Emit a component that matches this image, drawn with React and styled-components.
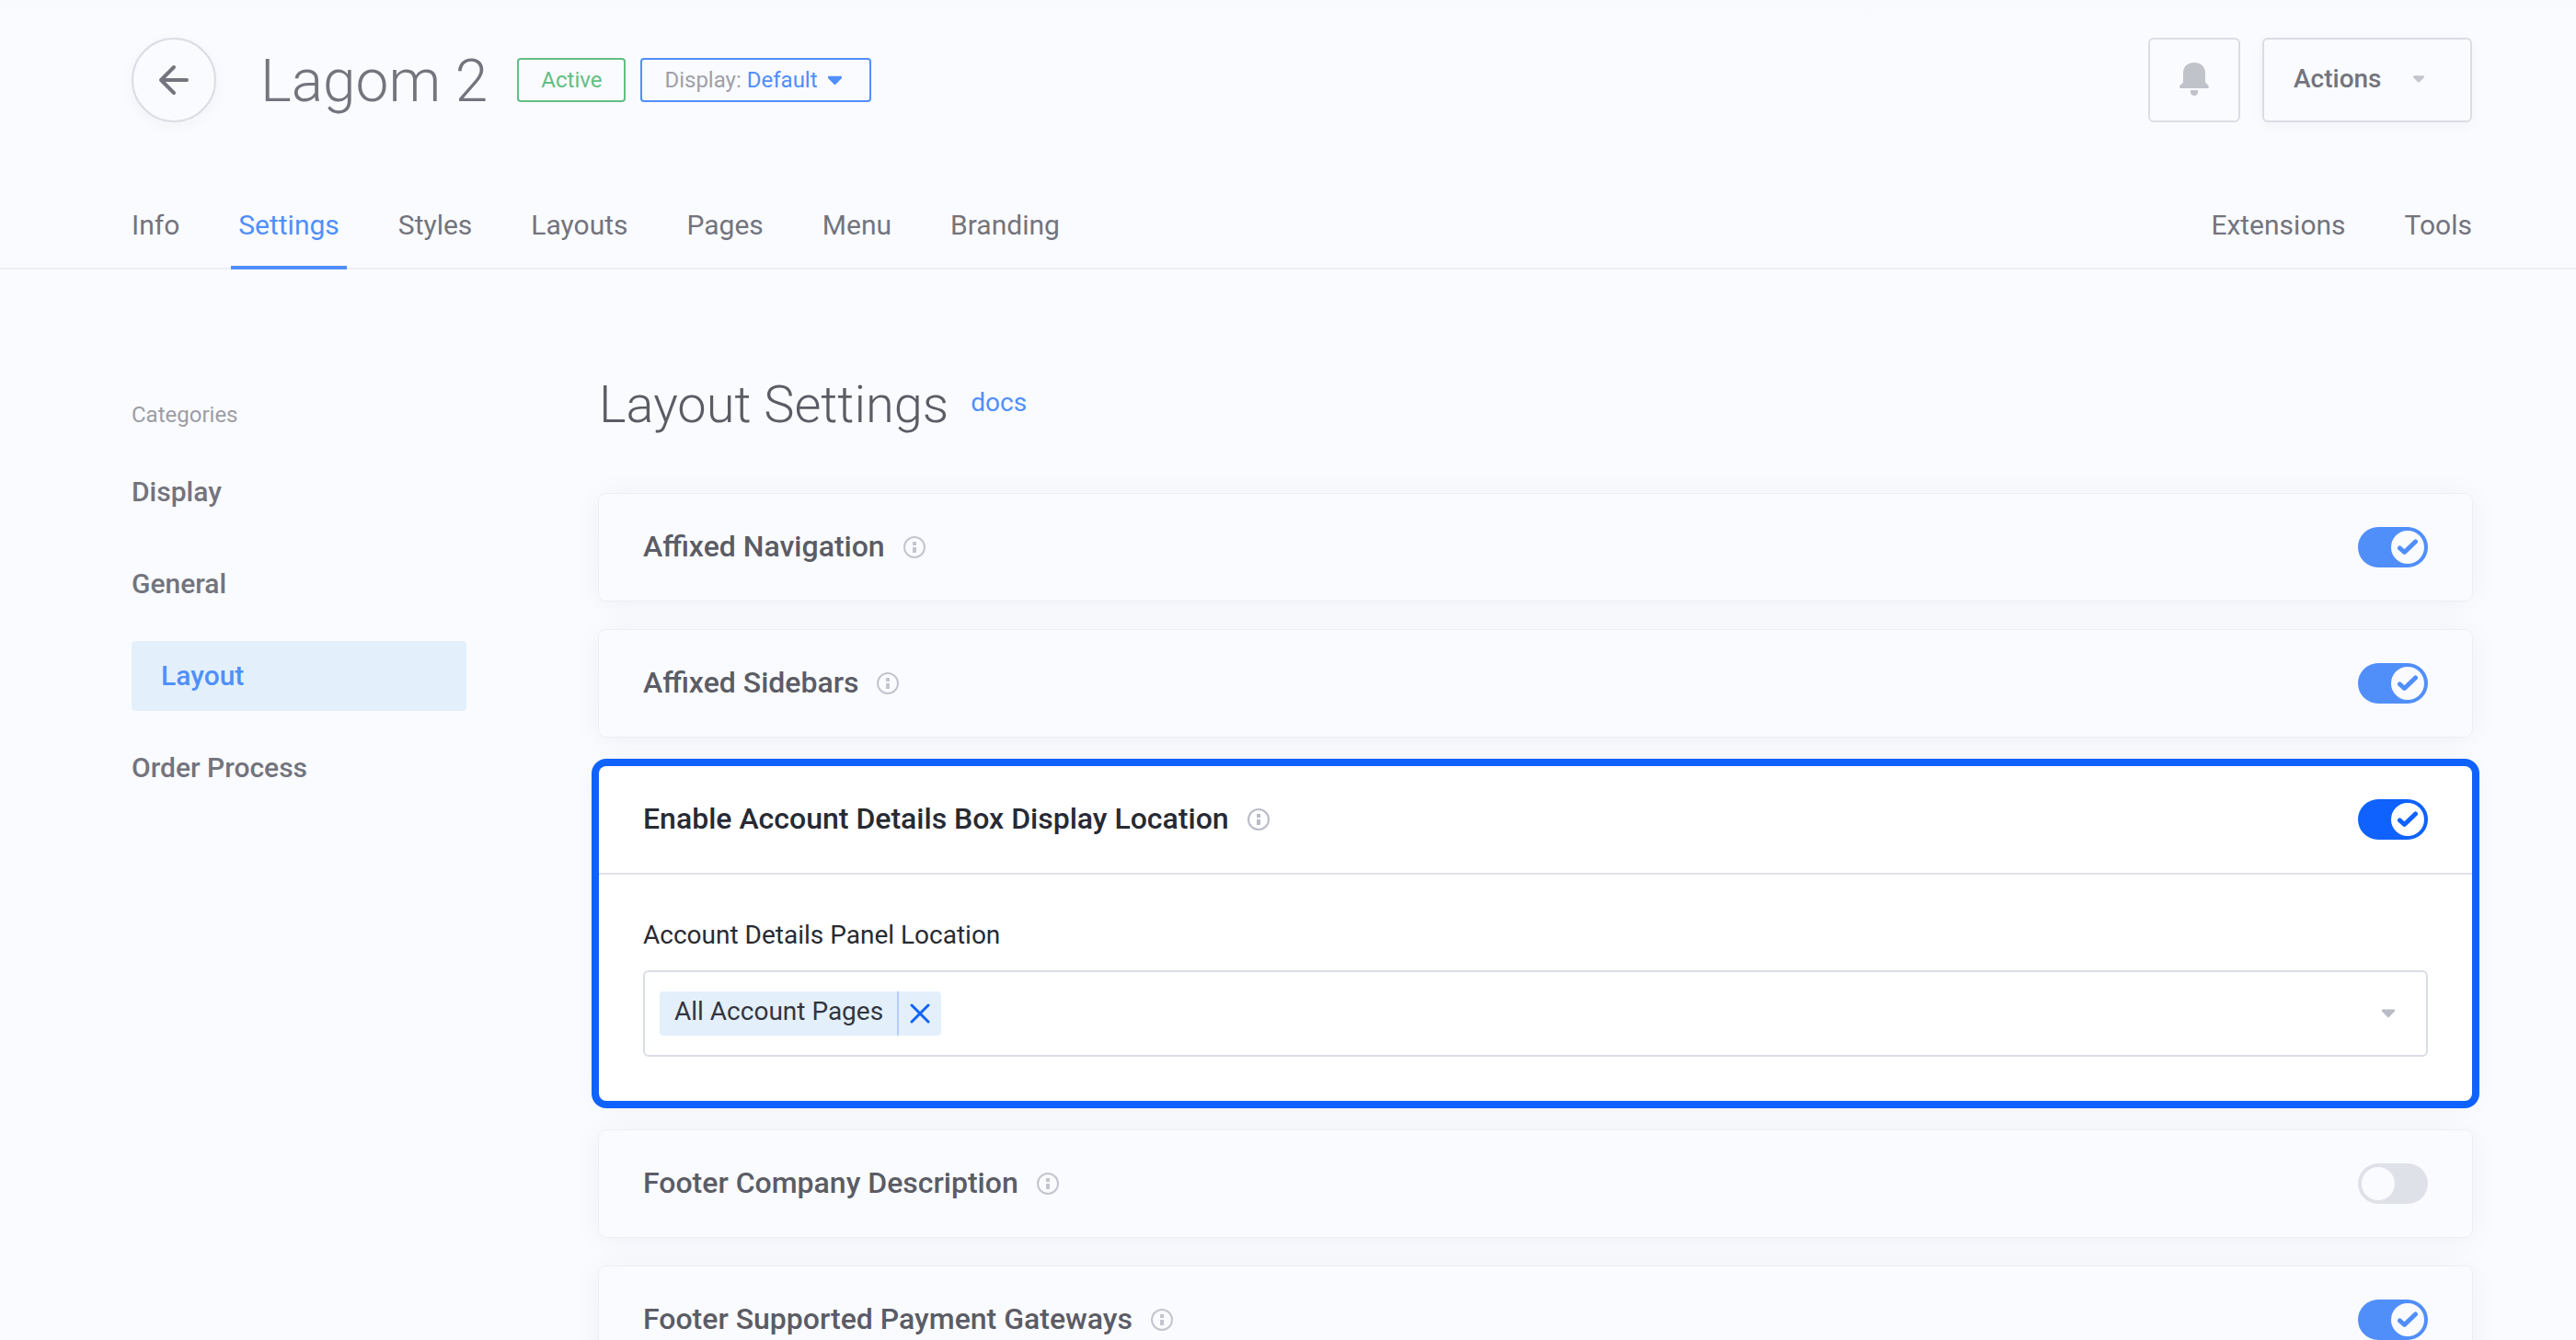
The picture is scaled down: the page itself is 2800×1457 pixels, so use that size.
import React, { useState } from 'react';
import styled, { createGlobalStyle } from 'styled-components';

const GlobalStyle = createGlobalStyle`
  *, *::before, *::after { box-sizing: border-box; }
  body {
    margin: 0;
    background: #fafbff;
    color: #73747d;
    font-family: Roboto, "Liberation Sans", sans-serif;
    font-size: 28px;
    line-height: 40px;
  }
  button, select, input { font: inherit; color: inherit; }
  h1, h2, h3, p { margin: 0; }
`;

const Page = styled.div`
  min-height: 100vh;
  overflow: hidden;
  background: linear-gradient(#f8f9fc, #fafbff 24px);
`;

const Header = styled.header`
  display: flex;
  align-items: center;
  padding: 41px 113px 0 143px;
`;

const BackButton = styled.button`
  display: grid;
  place-items: center;
  width: 92px;
  height: 92px;
  margin-right: 48px;
  padding: 0;
  border: 2px solid #dcdde4;
  border-radius: 50%;
  background: #fafbff;
  box-shadow: 0 4px 16px rgba(40, 42, 60, 0.04);
`;

const Title = styled.h1`
  margin-right: 32px;
  padding-top: 4px;
  font-size: 64px;
  line-height: 88px;
  font-weight: 300;
`;

const Badge = styled.span`
  height: 48px;
  margin-right: 16px;
  padding: 0 24px;
  border: 2px solid #62bf83;
  border-radius: 4px;
  color: #62bf83;
  font-size: 24px;
  line-height: 44px;
`;

const DisplayButton = styled.button`
  display: flex;
  align-items: center;
  gap: 6px;
  height: 48px;
  padding: 0 30px 0 24px;
  border: 2px solid #508ffa;
  border-radius: 4px;
  background: transparent;
  color: #9fa0a8;
  font-size: 24px;
  line-height: 44px;

  strong { font-weight: 400; color: #508ffa; margin-right: 5px; }
`;

const HeaderActions = styled.div`
  display: flex;
  gap: 24px;
  margin-left: auto;
`;

const OutlineButton = styled.button`
  display: flex;
  align-items: center;
  justify-content: ${(p) => (p.$wide ? 'flex-start' : 'center')};
  gap: 34px;
  width: ${(p) => (p.$wide ? 228 : 100)}px;
  height: 92px;
  padding: 0 ${(p) => (p.$wide ? 32 : 0)}px 2px;
  border: 2px solid #dcdde4;
  border-radius: 6px;
  background: #fafbff;
  box-shadow: ${(p) => (p.$wide ? '0 4px 16px rgba(40, 42, 60, 0.04)' : 'none')};
  font-size: 28px;
  font-weight: 500;
`;

const Tabs = styled.nav`
  display: flex;
  gap: 48px;
  margin-top: 68px;
  padding: 0 105px 0 135px;
  border-bottom: 2px solid #eeeff4;
`;

const Tab = styled.a`
  height: 92px;
  margin-bottom: -2px;
  margin-left: ${(p) => (p.$end ? 'auto' : 0)};
  padding: 22px 8px 0;
  border-bottom: 4px solid ${(p) => (p.$active ? '#508ffa' : 'transparent')};
  color: ${(p) => (p.$active ? '#508ffa' : 'inherit')};
  font-size: 30px;
  line-height: 44px;
  text-decoration: none;
`;

const Body = styled.div`
  display: grid;
  grid-template-columns: 364px minmax(0, 1fr);
  column-gap: 144px;
  padding: 108px 113px 0 143px;
`;

const Sidebar = styled.aside`
  display: flex;
  flex-direction: column;
  gap: 24px;
  padding-top: 32px;
`;

const SidebarTitle = styled.p`
  color: #9d9da4;
  font-size: 24px;
  line-height: 36px;
`;

const SidebarLinks = styled.nav`
  display: flex;
  flex-direction: column;
  gap: 24px;
  padding-top: 4px;
`;

const SidebarLink = styled.a`
  padding: 16px ${(p) => (p.$active ? 32 : 0)}px;
  border-radius: 4px;
  background: ${(p) => (p.$active ? '#e3f0fb' : 'transparent')};
  color: ${(p) => (p.$active ? '#508ffa' : 'inherit')};
  font-size: 30px;
  line-height: 44px;
  font-weight: 500;
  text-decoration: none;
`;

const HeadingRow = styled.div`
  display: flex;
  align-items: center;
  gap: 24px;
  padding-top: 3px;
  margin-bottom: 61px;

  h2 { font-size: 56px; line-height: 72px; font-weight: 300; color: #5b5c65; }
  a { color: #508ffa; font-size: 28px; line-height: 40px; text-decoration: none; padding-bottom: 4px; }
`;

const CardList = styled.div`
  display: flex;
  flex-direction: column;
  gap: 32px;
`;

const Card = styled.section`
  border-radius: 8px;
  background: ${(p) => (p.$highlight ? '#ffffff' : '#fafbff')};
  color: ${(p) => (p.$highlight ? '#282a33' : '#5b5c65')};
  box-shadow: ${(p) => (p.$highlight ? '0 0 0 8px #0f62fe, ' : '')}0 0 0 1px rgba(40, 42, 60, 0.04), 0 2px 32px rgba(40, 42, 60, 0.05);
`;

const CardHead = styled.div`
  display: flex;
  align-items: center;
  height: 116px;
  padding: 0 48px;

  label { font-size: 32px; line-height: 44px; font-weight: 500; margin-right: 20px; padding-bottom: 2px; }
`;

const InfoButton = styled.button`
  display: flex;
  margin: 0 auto 0 0;
  padding: 0;
  border: 0;
  background: none;
  color: ${(p) => (p.$strong ? '#b9bcc7' : '#c3c5cf')};
`;

const Switch = styled.span`
  display: grid;
  width: 76px;
  height: 44px;

  > * { grid-area: 1 / 1; }

  input {
    appearance: none;
    width: 76px;
    height: 44px;
    margin: 0;
    border-radius: 22px;
    background: ${(p) => p.$color};
  }
`;

const Knob = styled.span`
  display: grid;
  place-items: center;
  width: 36px;
  height: 36px;
  margin: 4px;
  justify-self: ${(p) => (p.$on ? 'end' : 'start')};
  border-radius: 50%;
  background: ${(p) => (p.$highlight ? '#ffffff' : '#fafbff')};
  color: ${(p) => p.$color};
  pointer-events: none;
`;

const CardBody = styled.div`
  display: flex;
  flex-direction: column;
  gap: 18px;
  padding: 46px 48px 48px;
  border-top: 2px solid #dfe0e6;
`;

const MultiSelect = styled.div`
  display: flex;
  align-items: center;
  padding: 21px 34px 21px 16px;
  border: 2px solid #dadde5;
  border-radius: 6px;

  select {
    flex: 1;
    appearance: none;
    height: 48px;
    border: 0;
    background: none;
    outline: none;
  }
  > svg { pointer-events: none; }
`;

const Tag = styled.span`
  display: flex;
  height: 48px;
  border-radius: 4px;
  background: #e3f0fb;
  color: #33353f;
  line-height: 44px;

  span { padding: 0 15px 0 16px; }
  button {
    display: grid;
    place-items: center;
    width: 48px;
    padding: 0;
    border: 0;
    border-left: 2px solid #b5cff8;
    background: none;
    color: #0f62fe;
  }
`;

const Caret = ({ color, size }) => (
  <svg width={size} height={size} viewBox="0 0 14 14" aria-hidden="true">
    <path d="M0.8 2.6H13.2Q14 2.6 14 3.4V4.6L8 10.8Q7 11.8 6 10.8L0 4.6V3.4Q0 2.6 0.8 2.6Z" fill={color} />
  </svg>
);

const ArrowLeft = () => (
  <svg width="36" height="36" viewBox="0 0 36 36" fill="none" stroke="#73747d" strokeWidth="4" strokeLinecap="round" strokeLinejoin="round" aria-hidden="true">
    <path d="M32 18H4M18 4L4 18L18 32" />
  </svg>
);

const Bell = () => (
  <svg width="32" height="36" viewBox="0 0 32 36" fill="#c1c3cb" aria-hidden="true">
    <path d="M16 0C9 0 4 4.600 4 11V21.500L0.600 25C-0.300 26 0 28 1 28H31C32 28 32.300 26 31.400 25L28 21.500V11C28 4.600 23 0 16 0Z" />
    <path d="M12 30H20V32C20 34.600 18.400 36 16 36S12 34.600 12 32Z" />
  </svg>
);

const Info = () => (
  <svg width="24" height="24" viewBox="0 0 24 24" aria-hidden="true">
    <circle cx="12" cy="12" r="11" fill="none" stroke="currentColor" strokeWidth="2" />
    <path d="M10 6H14V10H10ZM10 12H14V18H10Z" fill="currentColor" />
  </svg>
);

const Check = () => (
  <svg width="22" height="18" viewBox="0 0 22 18" fill="none" stroke="currentColor" strokeWidth="5" aria-hidden="true">
    <path d="M2.500 10L7.500 14.500L19.500 3" strokeLinecap="round" strokeLinejoin="round" />
  </svg>
);

const Cross = () => (
  <svg width="22" height="22" viewBox="0 0 22 22" fill="none" stroke="currentColor" strokeWidth="3" strokeLinecap="round" aria-hidden="true">
    <path d="M2 2L20 20M20 2L2 20" />
  </svg>
);

function Setting({ id, title, defaultOn = false, highlight = false, children }) {
  const [on, setOn] = useState(defaultOn);
  const color = !on ? '#dfe1e8' : highlight ? '#0f62fe' : '#508ffa';
  return (
    <Card $highlight={highlight}>
      <CardHead>
        <label htmlFor={id}>{title}</label>
        <InfoButton type="button" aria-label="More information" $strong={highlight}><Info /></InfoButton>
        <Switch $color={color}>
          <input id={id} type="checkbox" role="switch" checked={on} onChange={() => setOn(!on)} />
          <Knob $on={on} $highlight={highlight} $color={color}>{on && <Check />}</Knob>
        </Switch>
      </CardHead>
      {children}
    </Card>
  );
}

const tabs = ['Info', 'Settings', 'Styles', 'Layouts', 'Pages', 'Menu', 'Branding'];
const endTabs = ['Extensions', 'Tools'];
const categories = ['Display', 'General', 'Layout', 'Order Process'];

export default function App() {
  return (
    <Page>
      <GlobalStyle />
      <Header>
        <BackButton type="button" aria-label="Back"><ArrowLeft /></BackButton>
        <Title>Lagom 2</Title>
        <Badge>Active</Badge>
        <DisplayButton type="button" aria-haspopup="menu">
          Display: <strong>Default</strong> <Caret color="#508ffa" size={15} />
        </DisplayButton>
        <HeaderActions>
          <OutlineButton type="button" aria-label="Notifications"><Bell /></OutlineButton>
          <OutlineButton type="button" aria-haspopup="menu" $wide>
            Actions <Caret color="#c3c5cd" size={12} />
          </OutlineButton>
        </HeaderActions>
      </Header>
      <Tabs aria-label="Theme">
        {tabs.map((t) => <Tab key={t} href="#" $active={t === 'Settings'}>{t}</Tab>)}
        {endTabs.map((t, i) => <Tab key={t} href="#" $end={i === 0}>{t}</Tab>)}
      </Tabs>
      <Body>
        <Sidebar>
          <SidebarTitle>Categories</SidebarTitle>
          <SidebarLinks aria-label="Categories">
            {categories.map((c) => <SidebarLink key={c} href="#" $active={c === 'Layout'}>{c}</SidebarLink>)}
          </SidebarLinks>
        </Sidebar>
        <main>
          <HeadingRow>
            <h2>Layout Settings</h2>
            <a href="#docs">docs</a>
          </HeadingRow>
          <CardList>
            <Setting id="affixed-navigation" title="Affixed Navigation" defaultOn />
            <Setting id="affixed-sidebars" title="Affixed Sidebars" defaultOn />
            <Setting id="account-box" title="Enable Account Details Box Display Location" defaultOn highlight>
              <CardBody>
                <label htmlFor="panel-location">Account Details Panel Location</label>
                <MultiSelect>
                  <Tag>
                    <span>All Account Pages</span>
                    <button type="button" aria-label="Remove All Account Pages"><Cross /></button>
                  </Tag>
                  <select id="panel-location" defaultValue=""><option value="" /></select>
                  <Caret color="#b9bcc4" size={14} />
                </MultiSelect>
              </CardBody>
            </Setting>
            <Setting id="footer-company" title="Footer Company Description" />
            <Setting id="footer-gateways" title="Footer Supported Payment Gateways" defaultOn />
          </CardList>
        </main>
      </Body>
    </Page>
  );
}
